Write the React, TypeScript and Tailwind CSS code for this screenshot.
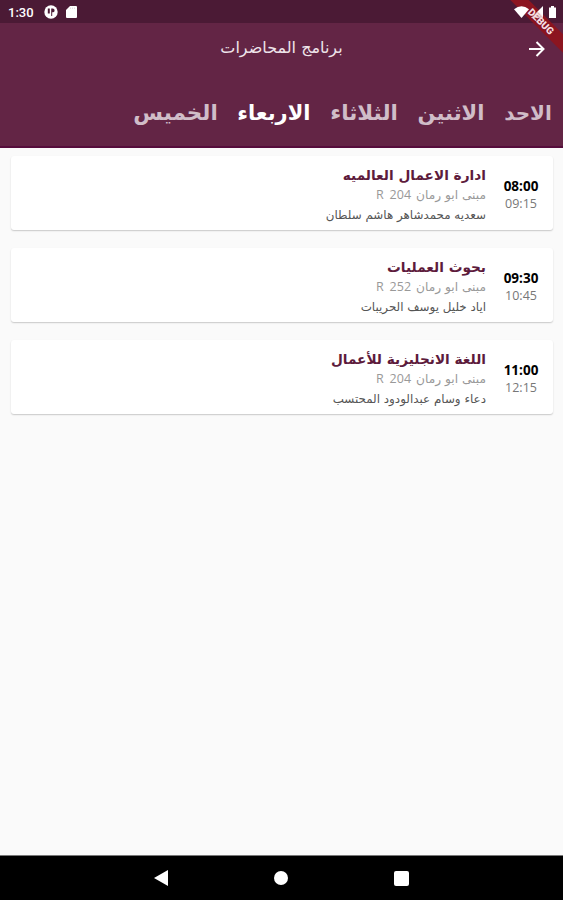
import { clsx } from "clsx";

interface Lecture {
  title: string;
  room: string;
  teacher: string;
  start: string;
  end: string;
}

const days = [
  { label: "الاحد", className: "w-[48px] text-[20px]" },
  { label: "الاثنين", className: "w-[67px] text-[21px]" },
  { label: "الثلاثاء", className: "w-[68px] text-[21.5px]" },
  { label: "الاربعاء", className: "w-[73px] text-[21px]" },
  { label: "الخميس", className: "w-[85px] text-[21.5px]" },
];

const activeDay = "الاربعاء";

const lectures: Lecture[] = [
  {
    title: "ادارة الاعمال العالميه",
    room: "204",
    teacher: "سعديه محمدشاهر هاشم سلطان",
    start: "08:00",
    end: "09:15",
  },
  {
    title: "بحوث العمليات",
    room: "252",
    teacher: "اياد خليل يوسف الحريبات",
    start: "09:30",
    end: "10:45",
  },
  {
    title: "اللغة الانجليزية للأعمال",
    room: "204",
    teacher: "دعاء وسام عبدالودود المحتسب",
    start: "11:00",
    end: "12:15",
  },
];

function StatusBar() {
  return (
    <div dir="ltr" className="flex h-[23px] items-center bg-[#4b1a35] pl-2 pr-[6px] pt-px text-white">
      <span className="font-['Roboto'] text-[13px] font-medium leading-none">1:30</span>
      <svg className="ml-[10px] size-[14px]" viewBox="0 0 14 14">
        <circle cx="7" cy="7" r="6.7" fill="#fff" />
        <path d="M4.8 3.500v5" stroke="#4b1a35" strokeWidth="2" />
        <path d="M7.200 3.500h1.500a1.900 1.900 0 0 1 0 3.800h-.500V11h-1z" fill="#4b1a35" />
      </svg>
      <svg className="ml-[8px] h-[12px] w-[11px]" viewBox="0 0 11 12">
        <path d="M4 0h6q1 0 1 1v10q0 1-1 1H1q-1 0-1-1V4z" fill="#fff" />
        <path d="M4.500 1.500v1.500M6.500 1.500v1.500M8.500 1.500v1.500" stroke="#d5c8cf" strokeWidth=".6" />
      </svg>
      <svg className="relative z-10 ml-auto h-[13px] w-[43px]" viewBox="0 0 43 13">
        <path d="M0 3.200Q7.500-2.500 15 3.200L7.500 12z" fill="#fff" />
        <path d="M29 0v12H17z" fill="#fff" />
        <path d="M35 1.500h2V0h3v1.500h2V12h-7z" fill="#fff" />
      </svg>
    </div>
  );
}

function DebugBanner() {
  return (
    <div dir="ltr" className="absolute right-0 top-0 size-[60px] overflow-hidden">
      <div className="absolute left-[-12px] top-[15px] h-[13px] w-[100px] rotate-45 bg-[#8c1520]" />
    </div>
  );
}

// Sits above the status icons, unlike the ribbon itself
function DebugLabel() {
  return (
    <span
      dir="ltr"
      className="absolute right-[4px] top-[15px] z-20 w-[36px] rotate-45 text-center font-['Roboto'] text-[10px] font-black leading-[13px] text-[#f6dfe2] [text-shadow:0_0_2px_#7a1420]"
    >
      DEBUG
    </span>
  );
}

function LectureCard({ lecture }: { lecture: Lecture }) {
  return (
    <article className="flex h-[74px] rounded-[3px] bg-white shadow-[0_1px_1.5px_rgba(0,0,0,0.2)]">
      <div className="flex w-[64px] flex-col items-center pt-[21px] font-['Open_Sans',sans-serif] leading-[18px]">
        <span className="text-[13.5px] font-bold text-black">{lecture.start}</span>
        <span className="text-[12.5px] text-[#777]">{lecture.end}</span>
      </div>
      <div className="ms-[3px] flex flex-col items-start whitespace-nowrap pt-[8px]">
        <h2 className="text-[13.7px] font-bold leading-[22px] text-[#5d1b3c]">{lecture.title}</h2>
        <p className="flex text-[12.2px] leading-[18px] text-[#999]">
          <span>مبنى ابو رمان</span>
          <span className="ms-[5px] font-['Open_Sans'] text-[12.5px]">{lecture.room}</span>
          <span className="ms-[6px] font-['Open_Sans'] text-[12.5px]">R</span>
        </p>
        <p className="text-[11.9px] leading-[23px] text-[#555]">{lecture.teacher}</p>
      </div>
    </article>
  );
}

export default function App() {
  return (
    <div
      dir="rtl"
      className="relative flex h-[900px] w-[563px] flex-col overflow-hidden bg-[#fafafa] font-['DejaVu_Sans',sans-serif]"
    >
      <StatusBar />

      <header className="h-[125px] border-b-2 border-[#560d3c] bg-[#632545]">
        <div className="grid h-[50px] grid-cols-[1fr_auto_1fr] items-center">
          <button aria-label="رجوع" className="pr-[18px] pt-[2px] text-white">
            <svg className="size-[16px]" viewBox="0 0 16 16" fill="none" stroke="currentColor" strokeWidth="2">
              <path d="M0 8h14M7.500 1l7 7-7 7" />
            </svg>
          </button>
          <h1 className="text-[16px] text-[#eee4ea]">برنامج المحاضرات</h1>
        </div>
        <nav className="flex gap-[19.5px] pr-[11px] pt-[23px]">
          {days.map((day) => (
            <button
              key={day.label}
              className={clsx(
                "whitespace-nowrap font-bold leading-[34px]",
                day.className,
                day.label === activeDay ? "text-white" : "text-[#d0bdc8]"
              )}
            >
              {day.label}
            </button>
          ))}
        </nav>
      </header>

      <main className="flex flex-1 flex-col gap-[18px] pl-[11px] pr-[10px] pt-[8px]">
        {lectures.map((lecture) => (
          <LectureCard key={lecture.start} lecture={lecture} />
        ))}
      </main>

      {/* Android navigation bar */}
      <footer dir="ltr" className="flex h-[45px] items-center justify-center gap-[106px] border-t border-[#777] bg-black">
        <svg className="h-[16px] w-[14px]" viewBox="0 0 14 16">
          <path d="M14 0v16L0 8z" fill="#fff" />
        </svg>
        <span className="size-[14px] rounded-full bg-white" />
        <span className="size-[15px] rounded-[2px] bg-white" />
      </footer>

      <DebugBanner />
      <DebugLabel />
    </div>
  );
}
